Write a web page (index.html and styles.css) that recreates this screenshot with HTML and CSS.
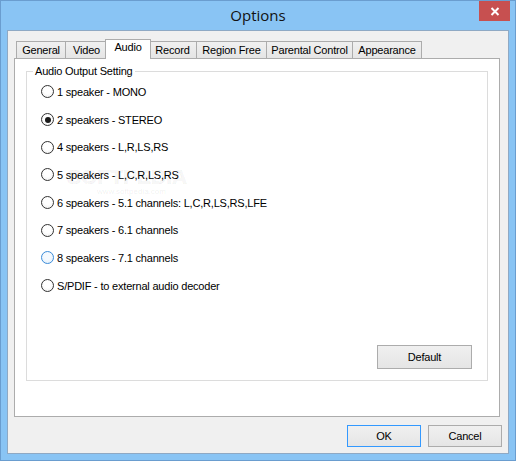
FILE: index.html
```html
<!DOCTYPE html>
<html lang="en">
<head>
  <meta charset="UTF-8" />
  <title>Options</title>
  <link rel="stylesheet" href="styles.css">
</head>
<body>
  <div class="window">
    <div class="titlebar">
      <span class="title">Options</span>
      <button class="close" title="Close">
        <svg width="10" height="9" viewBox="0 0 10 9"><path d="M1.5 1 L8.5 8 M8.5 1 L1.5 8" stroke="#fff" stroke-width="2" fill="none"/></svg>
      </button>
    </div>

    <div class="client">
      <!-- tab strip -->
      <div class="tabs">
        <div class="tab tab-general">General</div>
        <div class="tab tab-video">Video</div>
        <div class="tab tab-audio active">Audio</div>
        <div class="tab tab-record">Record</div>
        <div class="tab tab-region">Region Free</div>
        <div class="tab tab-parental">Parental Control</div>
        <div class="tab tab-appearance">Appearance</div>
      </div>

      <div class="page">
        <fieldset class="group">
          <legend>Audio Output Setting</legend>
          <div class="options">
            <label class="radio"><span class="mark"></span>1 speaker - MONO</label>
            <label class="radio"><span class="mark checked"></span>2 speakers - STEREO</label>
            <label class="radio"><span class="mark"></span>4 speakers - L,R,LS,RS</label>
            <label class="radio"><span class="mark"></span>5 speakers - L,C,R,LS,RS</label>
            <label class="radio"><span class="mark"></span>6 speakers - 5.1 channels: L,C,R,LS,RS,LFE</label>
            <label class="radio"><span class="mark"></span>7 speakers - 6.1 channels</label>
            <label class="radio"><span class="mark hover"></span>8 speakers - 7.1 channels</label>
            <label class="radio"><span class="mark"></span>S/PDIF - to external audio decoder</label>
          </div>
          <button class="btn btn-default">Default</button>
        </fieldset>
        <div class="watermark">SOFTPEDIA<span>www.softpedia.com</span></div>
      </div>

      <div class="actions">
        <button class="btn btn-ok">OK</button>
        <button class="btn">Cancel</button>
      </div>
    </div>
  </div>
</body>
</html>
```

FILE: styles.css
```css
/* base */
* {
  box-sizing: border-box;
}
body {
  margin: 0;
  font-family: "Liberation Sans", Arial, sans-serif;
  font-size: 11px;
  letter-spacing: -0.2px;
  color: #000;
}

/* window frame */
.window {
  width: 516px;
  height: 461px;
  background: #89c4f4;
  border: 1px solid #6a9dcf;
  padding: 0 6px 6px;
  display: flex;
  flex-direction: column;
}
.titlebar {
  height: 29px;
  display: grid;
  grid-template-columns: 1fr auto 1fr;
}
.title {
  grid-column: 2;
  font-family: "Open Sans", "Noto Sans", sans-serif;
  font-size: 15px;
  letter-spacing: 0;
  line-height: 29px;
  color: #111;
}
.close {
  grid-column: 3;
  justify-self: end;
  align-self: start;
  width: 31px;
  height: 20px;
  margin-right: -1px;
  border: 0;
  padding: 0;
  background: #c75050;
  display: flex;
  align-items: center;
  justify-content: center;
}

/* client area */
.client {
  flex: 1;
  background: #f0f0f0;
  border: 1px solid #8fa9c4;
  padding: 8px 6px 6px;
  display: flex;
  flex-direction: column;
}

/* tabs */
.tabs {
  height: 19px;
  margin-left: 2px;
  display: flex;
  align-items: flex-end;
  position: relative;
  z-index: 1;
}
.tab {
  height: 17px;
  margin-left: -1px;
  border: 1px solid #acacac;
  border-bottom: 0;
  background: linear-gradient(#f0f0f0, #e5e5e5);
  line-height: 16px;
  text-align: center;
  white-space: nowrap;
}
.tab-general { width: 50px; margin-left: 0; }
.tab-video { width: 43px; }
.tab-record { width: 49px; }
.tab-region { width: 71px; }
.tab-parental { width: 87px; }
.tab-appearance { width: 70px; }
.tab.active {
  width: 46px;
  height: 20px;
  margin: 0 -2px -1px -3px;
  background: #fff;
  line-height: 15px;
  position: relative;
}

.page {
  flex: 1;
  margin-right: 2px;
  background: #fff;
  border: 1px solid #acacac;
  display: flex;
  flex-direction: column;
  position: relative;
}

/* group box */
.group {
  flex: 1;
  min-width: 0;
  margin: 6px 11px 35px;
  padding: 0 15px 11px 6px;
  border: 1px solid #dcdcdc;
  display: flex;
  flex-direction: column;
}
.group legend {
  padding: 0 2px;
  line-height: 13px;
}

.options {
  display: flex;
  flex-direction: column;
}
.radio {
  height: 27.7px;
  padding-left: 8px;
  display: flex;
  align-items: center;
  gap: 3px;
  white-space: nowrap;
}
.mark {
  width: 13px;
  height: 13px;
  border: 1px solid #333;
  border-radius: 50%;
  background: radial-gradient(circle at 50% 40%, #fff 40%, #eaeaea 100%);
  position: relative;
}
.mark.checked::after {
  content: "";
  position: absolute;
  left: 2.5px;
  top: 2.5px;
  width: 6px;
  height: 6px;
  border-radius: 50%;
  background: #1a1a1a;
}
.mark.hover {
  border-color: #3c8cd8;
  background: radial-gradient(circle at 50% 40%, #f4f9fe 40%, #dcecfc 100%);
}

/* buttons */
.btn {
  font: inherit;
  letter-spacing: inherit;
  color: #000;
  padding: 0;
  border: 1px solid #acacac;
  border-radius: 0;
  background: linear-gradient(#f0f0f0, #e5e5e5);
}
.btn-default {
  width: 95px;
  height: 24px;
  margin-top: auto;
  align-self: flex-end;
}
.actions {
  margin-top: 8px;
  display: flex;
  justify-content: flex-end;
  gap: 7px;
}
.actions .btn {
  width: 74px;
  height: 22px;
}
.btn-ok {
  border-color: #3399ff;
}

/* faint watermark over the list */
.watermark {
  position: absolute;
  left: 52px;
  top: 107px;
  font-size: 21px;
  font-weight: bold;
  letter-spacing: 0;
  color: rgba(0, 0, 0, 0.035);
  -webkit-text-stroke: 0.6px rgba(0, 0, 0, 0.08);
  line-height: 21px;
  pointer-events: none;
}
.watermark span {
  display: block;
  font-size: 8px;
  font-weight: normal;
  line-height: 10px;
  margin-left: 30px;
  -webkit-text-stroke: 0;
  color: rgba(0, 0, 0, 0.08);
}
```
